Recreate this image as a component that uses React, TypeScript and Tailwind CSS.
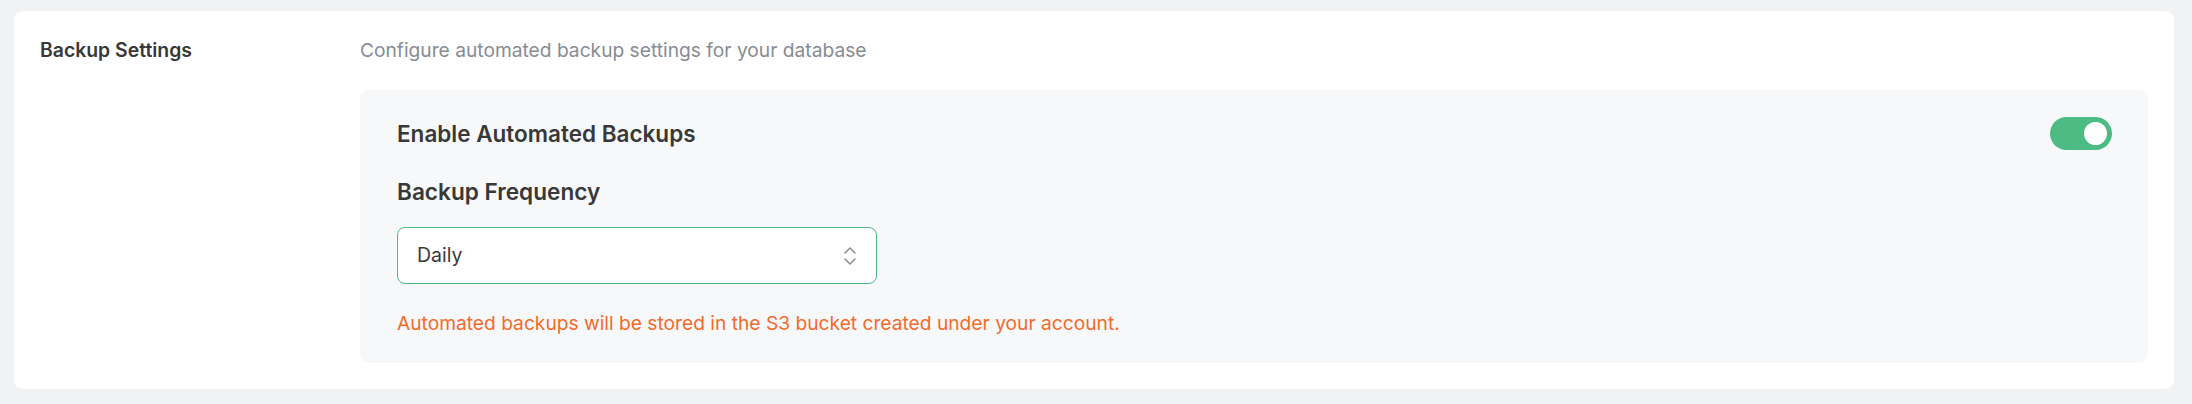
import React from "react";
import { ChevronsUpDown } from "lucide-react";

export default function App() {
  return (
    <div
      className="w-[2192px] h-[404px] bg-[#f1f2f4] pt-[11px] pl-[14px] pr-[18px] pb-[15px]"
      style={{ fontFamily: "Inter, 'Noto Sans', sans-serif" }}
    >
      <div className="h-[378px] bg-white rounded-[9px] p-[26px] flex">
        <div className="w-[320px] shrink-0">
          <div className="text-[19.4px] leading-[27px] font-semibold text-[#383838]">
            Backup Settings
          </div>
        </div>
        <div className="flex-1 flex flex-col">
          <div className="text-[19.2px] leading-[27px] text-[#868c95]">
            Configure automated backup settings for your database
          </div>
          <div className="mt-[26px] bg-[#f7f8fa] rounded-[9px] pl-[37px] pr-[36px] pt-[27px] pb-[27px]">
            <div className="flex items-center justify-between h-[33px]">
              <div className="text-[22.5px] leading-[33px] font-semibold text-[#383838]">
                Enable Automated Backups
              </div>
              <button className="w-[62px] h-[33px] rounded-full bg-[#4cbb84] flex items-center justify-end pr-[5px]">
                <span className="block w-[23px] h-[23px] rounded-full bg-white" />
              </button>
            </div>
            <div className="mt-[25px] text-[22.6px] leading-[33px] font-semibold text-[#383838]">
              Backup Frequency
            </div>
            <div className="mt-[19px] w-[480px] h-[57px] bg-white border border-[#4cbb84] rounded-[8px] flex items-center justify-between pl-[19px] pr-[14px]">
              <span className="text-[19.5px] leading-[27px] text-[#3a3a3a]">Daily</span>
              <ChevronsUpDown size={24} strokeWidth={1.6} className="text-[#8a8f98]" />
            </div>
            <div className="mt-[26px] text-[19.2px] leading-[26px] text-[#f46a2a]">
              Automated backups will be stored in the S3 bucket created under your account.
            </div>
          </div>
        </div>
      </div>
    </div>
  );
}
